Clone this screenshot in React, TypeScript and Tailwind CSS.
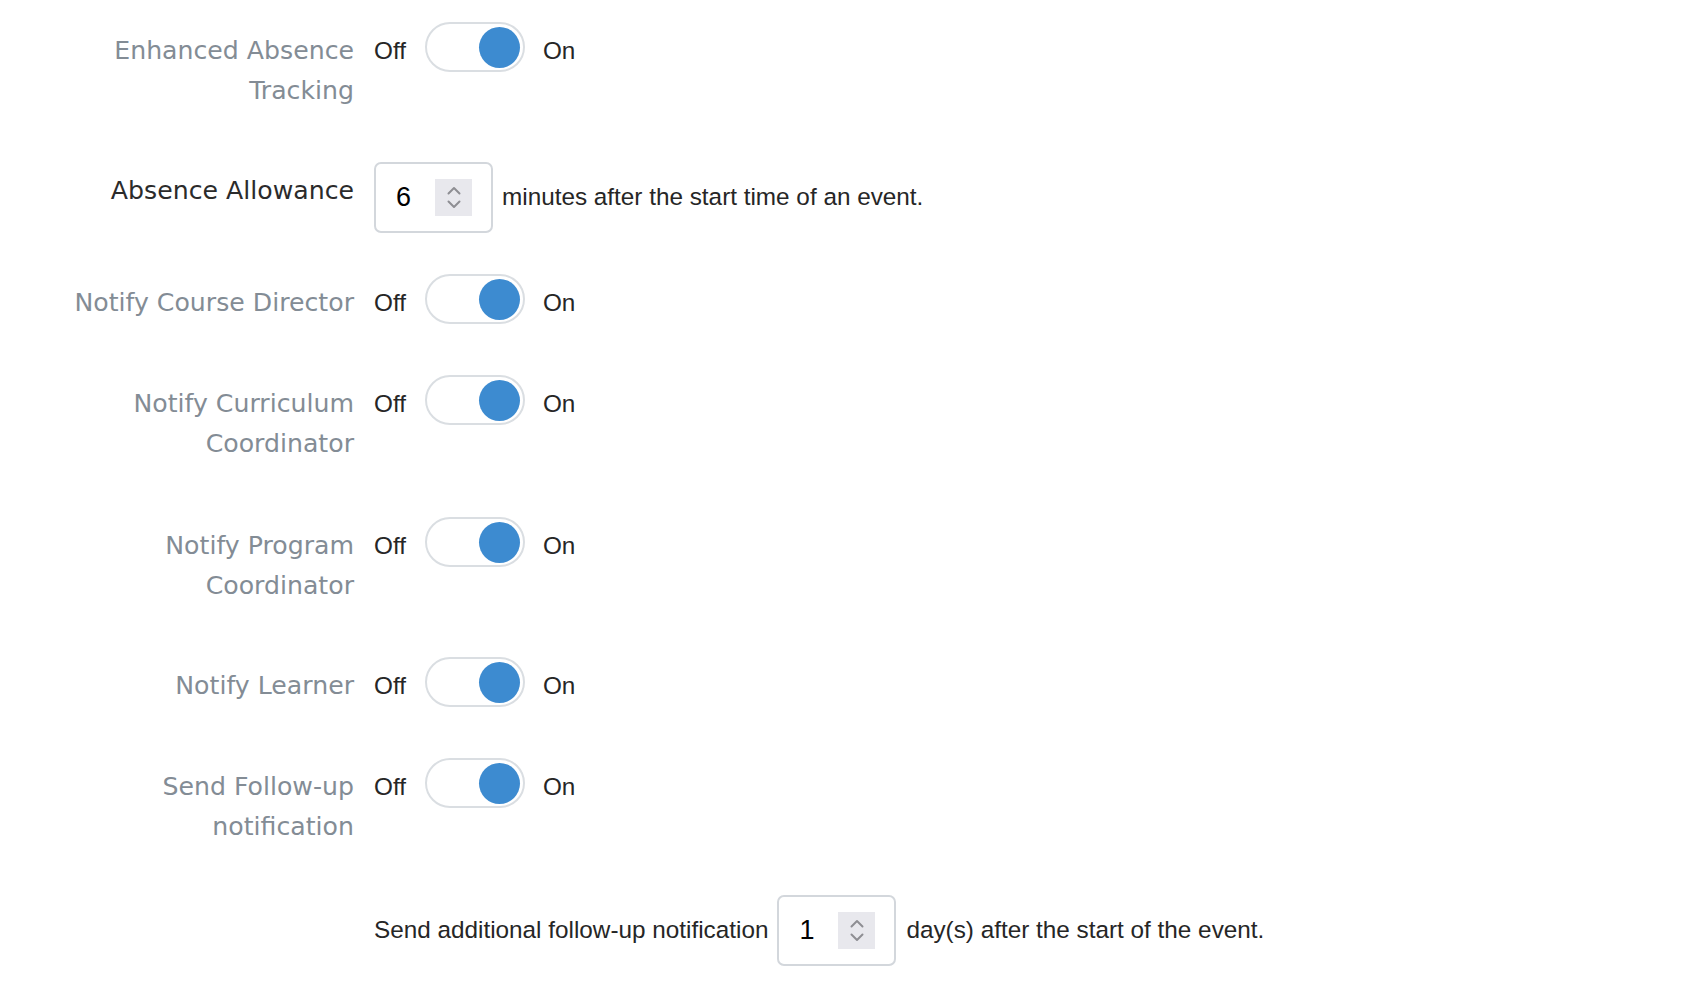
import React from "react";

const labelFont = { fontFamily: '"DejaVu Sans", "Liberation Sans", sans-serif' };

function Spinner() {
  return (
    <div className="w-[37px] h-[37px] bg-[#e8e8ed] flex flex-col items-center justify-center gap-[5px]">
      <svg width="14" height="9" viewBox="0 0 14 9" fill="none">
        <path d="M1.5 7.5 L7 2 L12.5 7.5" stroke="#8e8e93" strokeWidth="2" strokeLinecap="round" strokeLinejoin="round" />
      </svg>
      <svg width="14" height="9" viewBox="0 0 14 9" fill="none">
        <path d="M1.5 1.5 L7 7 L12.5 1.5" stroke="#8e8e93" strokeWidth="2" strokeLinecap="round" strokeLinejoin="round" />
      </svg>
    </div>
  );
}

function NumberBox({ value }: { value: string }) {
  return (
    <div className="w-[119px] h-[71px] shrink-0 border-2 border-[#d3d7dc] rounded-[7px] bg-white flex items-center pl-[20px] pr-[19px] justify-between">
      <span className="text-[27px] text-black leading-none">{value}</span>
      <Spinner />
    </div>
  );
}

function Toggle() {
  return (
    <div className="w-[100px] h-[50px] shrink-0 rounded-full border-[2.5px] border-[#dadee2] bg-white flex items-center justify-end pr-[3px]">
      <div className="w-[41px] h-[41px] rounded-full bg-[#3d8bd0]" />
    </div>
  );
}

function ToggleRow({ lines, className = "" }: { lines: string[]; className?: string }) {
  return (
    <div className={"flex items-start gap-[20px] " + className}>
      <div
        className="w-[354px] shrink-0 text-right pt-[9px] text-[25.2px] leading-[40px] text-[#838c95] whitespace-nowrap"
        style={labelFont}
      >
        {lines.map((l, i) => (
          <div key={i}>{l}</div>
        ))}
      </div>
      <div className="flex items-center h-[50px]">
        <span className="pt-[8px]">Off</span>
        <div className="ml-[19px] mr-[18px]">
          <Toggle />
        </div>
        <span className="pt-[8px]">On</span>
      </div>
    </div>
  );
}

export default function App() {
  return (
    <div
      className="min-h-[998px] bg-white pt-[22px] text-[24.3px] text-[#262626]"
      style={{ fontFamily: '"Liberation Sans", Arial, sans-serif' }}
    >
      <ToggleRow lines={["Enhanced Absence", "Tracking"]} className="mb-[51px]" />

      <div className="flex items-start gap-[20px] mb-[41px]">
        <div
          className="w-[354px] shrink-0 text-right pt-[9px] text-[25.2px] leading-[40px] text-[#2b2b2b] whitespace-nowrap"
          style={labelFont}
        >
          Absence Allowance
        </div>
        <div className="flex items-center">
          <NumberBox value="6" />
          <span className="ml-[9px]">minutes after the start time of an event.</span>
        </div>
      </div>

      <ToggleRow lines={["Notify Course Director"]} className="mb-[51px]" />
      <ToggleRow lines={["Notify Curriculum", "Coordinator"]} className="mb-[53px]" />
      <ToggleRow lines={["Notify Program", "Coordinator"]} className="mb-[51px]" />
      <ToggleRow lines={["Notify Learner"]} className="mb-[51px]" />
      <ToggleRow lines={["Send Follow-up", "notification"]} className="mb-[48px]" />

      <div className="flex items-start gap-[20px]">
        <div className="w-[354px] shrink-0" />
        <div className="flex items-center">
          <span>Send additional follow-up notification</span>
          <div className="ml-[9px]">
            <NumberBox value="1" />
          </div>
          <span className="ml-[10px]">day(s) after the start of the event.</span>
        </div>
      </div>
    </div>
  );
}
